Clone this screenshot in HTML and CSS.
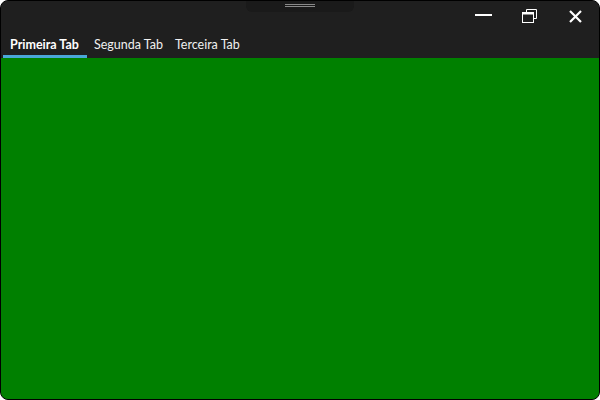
FILE: index.html
```html
<!DOCTYPE html>
<html>
<head>
<meta charset="utf-8">
<link rel="stylesheet" href="styles.css">
</head>
<body>
<div class="window">
  <div class="titlebar">
    <div class="handle"><span class="grip"></span></div>
    <div class="caption">
      <button class="cbtn">
        <svg width="18" height="18" viewBox="0 0 18 18"><rect x="0" y="6" width="17" height="2" fill="#fff"/></svg>
      </button>
      <button class="cbtn">
        <svg width="16" height="16" viewBox="0 0 16 16">
          <path d="M4.5 3.5 V0.5 H14.5 V9.5 H11.5" fill="none" stroke="#fff" stroke-width="1"/>
          <rect x="0.5" y="3.5" width="11" height="10" fill="none" stroke="#fff" stroke-width="1"/>
          <rect x="0.5" y="3.5" width="11" height="2" fill="#fff"/>
        </svg>
      </button>
      <button class="cbtn">
        <svg width="14" height="14" viewBox="0 0 14 14"><path d="M1 1 L12 12 M12 1 L1 12" stroke="#fff" stroke-width="2.2"/></svg>
      </button>
    </div>
    <div class="tabs">
      <div class="tab active">Primeira Tab</div>
      <div class="tab">Segunda Tab</div>
      <div class="tab">Terceira Tab</div>
    </div>
  </div>
  <div class="content"></div>
</div>
</body>
</html>
```
FILE: styles.css
```css
html, body { margin: 0; padding: 0; background: #fff; }
.window {
  width: 600px; height: 400px; box-sizing: border-box;
  border: 1px solid #000; border-radius: 8px; overflow: hidden;
  display: flex; flex-direction: column; background: #1f1f1f;
}
.titlebar { height: 57px; background: #1f1f1f; position: relative; display: flex; flex-direction: column; }
.handle {
  position: absolute; left: 245px; top: -1px; width: 108px; height: 12px;
  background: #1a1a1a; border-radius: 0 0 6px 6px;
}
.grip {
  position: absolute; left: 39px; top: 4px; width: 30px; height: 1px;
  border-top: 1px solid #8a8a8a; border-bottom: 1px solid #8a8a8a;
}
.caption { position: absolute; right: 0; top: 0; display: flex; }
.cbtn {
  width: 46px; height: 32px; border: 0; background: transparent; padding: 0;
  display: flex; align-items: center; justify-content: center;
}
.tabs { display: flex; margin-top: 33px; padding-left: 2px; }
.tab {
  font-family: Lato, "Noto Sans", sans-serif; font-size: 12.5px; color: #f0f0f0;
  padding: 0 5px 0 7px; line-height: 22px; box-sizing: border-box;
  white-space: nowrap; border-bottom: 3px solid transparent; height: 24px;
}
.tab.active { font-weight: 700; color: #fff; border-bottom-color: #4aa8d8; padding-right: 8px; }
.content { flex: 1; background: #008000; }
```
